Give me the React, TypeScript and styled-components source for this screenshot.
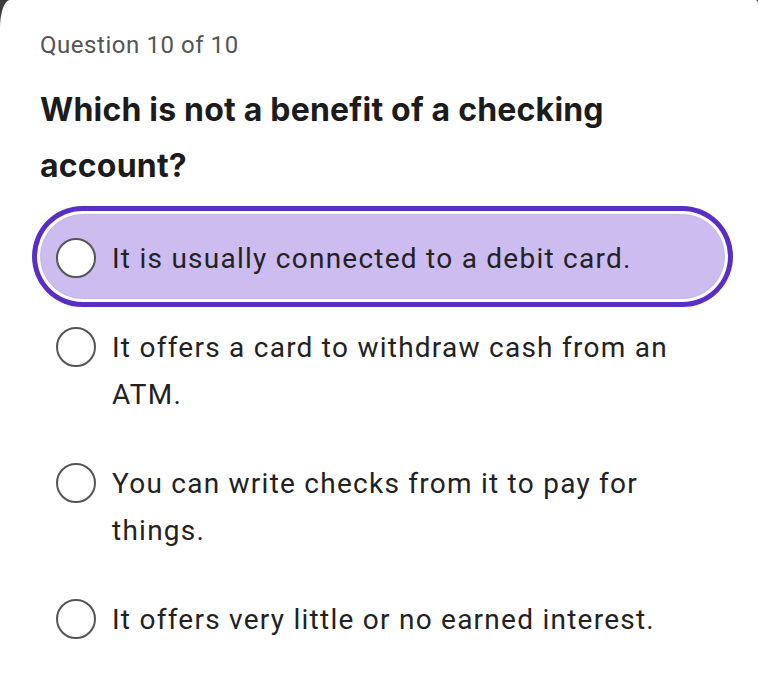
import React, { useState } from 'react'
import styled, { createGlobalStyle } from 'styled-components'

const GlobalStyle = createGlobalStyle`
  html, body {
    margin: 0;
    padding: 0;
    background: #3c3c3c;
  }
  * {
    box-sizing: border-box;
  }
`

const options = [
  'It is usually connected to a debit card.',
  'It offers a card to withdraw cash from an ATM.',
  'You can write checks from it to pay for things.',
  'It offers very little or no earned interest.',
]

const Sheet = styled.div`
  min-height: 692px;
  background: #fff;
  border-radius: 10px 3px 0 0 / 28px 3px 0 0;
  padding: 30px 33px 40px 40px;
  font-family: Roboto, 'Noto Sans', sans-serif;
`

const Counter = styled.div`
  font-size: 24px;
  line-height: 30px;
  color: #555;
  letter-spacing: 0.55px;
`

const Prompt = styled.h2`
  margin: 22px 0 20px;
  font-family: Inter, Roboto, sans-serif;
  font-size: 32px;
  font-weight: 700;
  line-height: 56px;
  color: #1c1c1c;
  letter-spacing: 0.2px;
  max-width: 620px;
`

const List = styled.div`
  display: flex;
  flex-direction: column;
  gap: 4px;
`

const Option = styled.button<{ $selected: boolean }>`
  display: flex;
  align-items: flex-start;
  gap: 16px;
  width: 100%;
  padding: 20px 15px 16px 15px;
  border: 1px solid ${(p) => (p.$selected ? '#c4b6e2' : 'transparent')};
  border-radius: 60px;
  background: ${(p) => (p.$selected ? '#ccbcf0' : 'transparent')};
  box-shadow: ${(p) => (p.$selected ? '0 0 0 3px #fff, 0 0 0 8px #5a2dc4' : 'none')};
  text-align: left;
  font-family: inherit;
  cursor: pointer;
`

const Radio = styled.span`
  flex-shrink: 0;
  width: 40px;
  height: 40px;
  margin-top: 3px;
  border-radius: 50%;
  border: 2px solid #555;
  background: #fff;
`

const Label = styled.span`
  font-size: 28px;
  line-height: 47px;
  color: #222;
  letter-spacing: 1.25px;
`

export default function App() {
  const [selected, setSelected] = useState(0)

  return (
    <>
      <GlobalStyle />
      <Sheet>
        <Counter>Question 10 of 10</Counter>
        <Prompt>Which is not a benefit of a checking account?</Prompt>
        <List>
          {options.map((text, i) => (
            <Option key={i} $selected={i === selected} onClick={() => setSelected(i)}>
              <Radio />
              <Label>{text}</Label>
            </Option>
          ))}
        </List>
      </Sheet>
    </>
  )
}
